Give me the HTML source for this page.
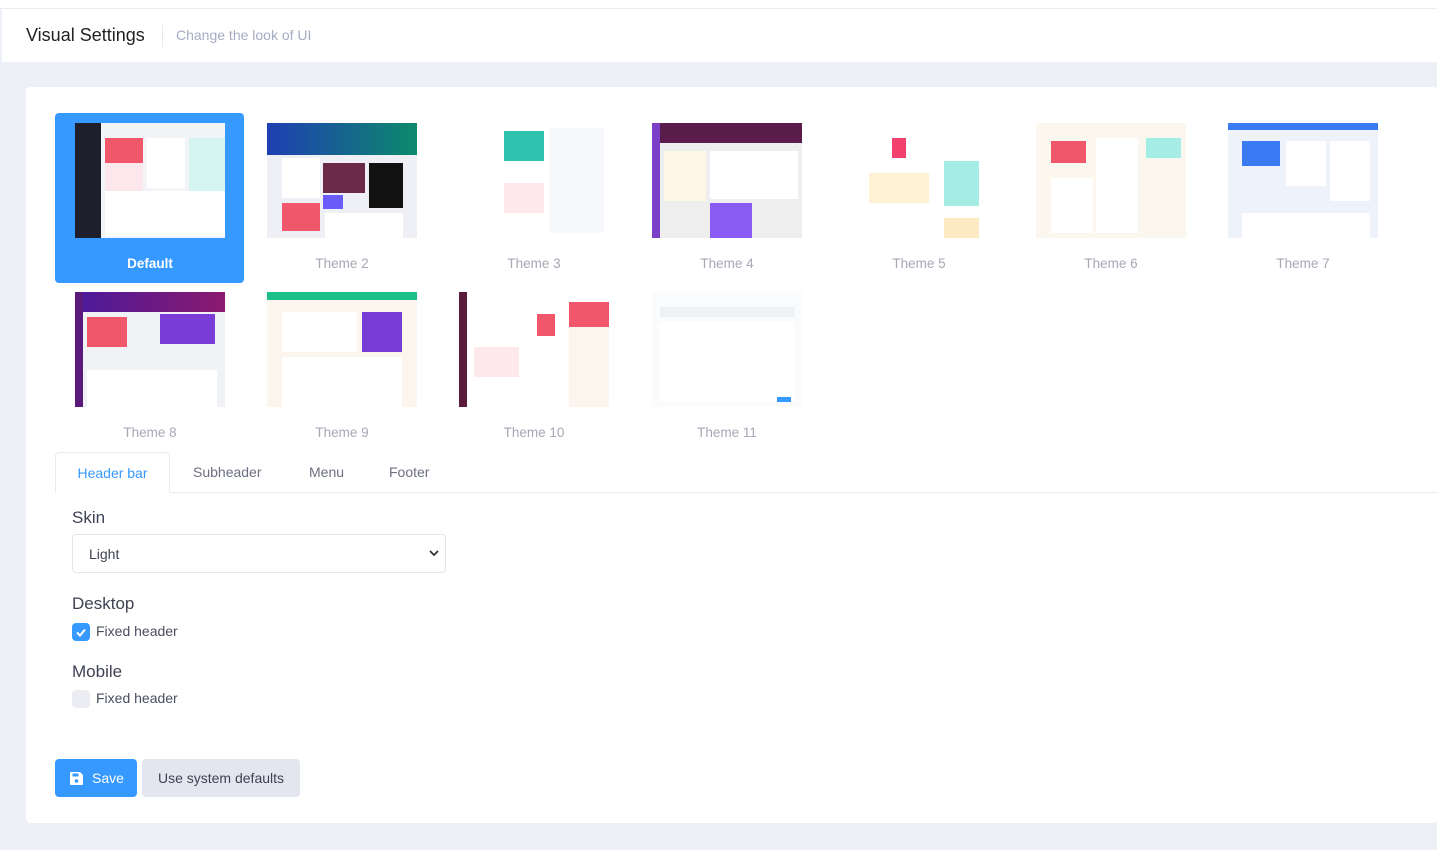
<!DOCTYPE html>
<html><head><style>
*{box-sizing:border-box;margin:0;padding:0}
body{width:1437px;height:850px;background:#eef0f7;font-family:"Liberation Sans",sans-serif;position:relative;overflow:hidden}
.top{position:absolute;left:0;top:0;width:1437px;height:9px;background:#fff;border-bottom:1px solid #ebedf2}
.sub{position:absolute;left:2px;top:9px;width:1435px;height:53px;background:#fff}
.sub h1{position:absolute;left:24px;top:16px;font-size:18px;font-weight:normal;color:#222}
.sub .sep{position:absolute;left:160px;top:16px;width:1px;height:22px;background:#e7e8ee}
.sub span{position:absolute;left:174px;top:18px;font-size:14px;color:#a7abc3}
.card{position:absolute;left:26px;top:87px;width:1411px;height:736px;background:#fff;border-radius:4px}
.sel{position:absolute;left:55px;top:113px;width:189px;height:170px;background:#3699ff;border-radius:4px}
.th{position:absolute;width:150px;height:115px;background:#f5f6fa;overflow:hidden}
.th i{position:absolute;display:block}
.lab{position:absolute;width:150px;text-align:center;font-size:13.5px;color:#a5a8b5}
.tabs{position:absolute;left:55px;top:452px;width:1382px;height:41px;border-bottom:1px solid #e7eaef}
.tab{position:absolute;top:0;height:41px;line-height:41px;font-size:14px;color:#6b6f80}
.tab.a{left:0;width:115px;border:1px solid #e7eaef;border-bottom:1px solid #fff;border-radius:4px 4px 0 0;color:#3699ff;text-align:center;height:41px}
.lbl{position:absolute;left:72px;font-size:17px;color:#3f4254}
.select{position:absolute;left:72px;top:534px;width:374px;height:39px;border:1px solid #e4e6ef;border-radius:4px;font-size:14px;color:#3f4254;padding:11px 16px}
.cb{position:absolute;left:72px;width:18px;height:18px;border-radius:4px;background:#ebedf3}
.cbt{position:absolute;left:96px;font-size:14px;color:#4a4e5e}
.btn{position:absolute;top:759px;height:38px;border-radius:4px;font-size:14px;line-height:38px}
</style></head><body>
<div class="top"></div>
<div class="sub"><h1>Visual Settings</h1><div class="sep"></div><span>Change the look of UI</span></div>
<div class="card"></div>
<div class="sel"></div>

<div class="th" style="left:75px;top:123px;background:#f3f4f8"><i style="left:0;top:0;width:26px;height:115px;background:#1e1e2d"></i><i style="left:30px;top:15px;width:38px;height:25px;background:#f1576a"></i><i style="left:30px;top:40px;width:38px;height:30px;background:#fce7ec"></i><i style="left:72px;top:15px;width:38px;height:50px;background:#fff"></i><i style="left:114px;top:15px;width:36px;height:60px;background:#d6f5f0"></i><i style="left:30px;top:68px;width:120px;height:45px;background:#fff"></i></div>
<div class="lab" style="left:75px;top:256px;color:#fff;font-weight:bold">Default</div>

<div class="th" style="left:267px;top:123px;background:#eef0f6"><i style="left:0;top:0;width:150px;height:32px;background:linear-gradient(90deg,#1f3fb3,#0d8a6c)"></i><i style="left:15px;top:35px;width:38px;height:40px;background:#fff"></i><i style="left:56px;top:40px;width:42px;height:30px;background:#6b2a4a"></i><i style="left:102px;top:40px;width:34px;height:45px;background:#111"></i><i style="left:56px;top:72px;width:20px;height:14px;background:#6a5af9"></i><i style="left:15px;top:80px;width:38px;height:28px;background:#f1576a"></i><i style="left:58px;top:90px;width:78px;height:25px;background:#fff"></i></div>
<div class="lab" style="left:267px;top:256px">Theme 2</div>

<div class="th" style="left:459px;top:123px;background:#fff"><i style="left:45px;top:8px;width:40px;height:30px;background:#2fc2ae"></i><i style="left:45px;top:60px;width:40px;height:30px;background:#fde8ec"></i><i style="left:90px;top:5px;width:55px;height:105px;background:#f7f8fb"></i></div>
<div class="lab" style="left:459px;top:256px">Theme 3</div>

<div class="th" style="left:652px;top:123px;background:#eee"><i style="left:0;top:0;width:150px;height:20px;background:#5a1c4a"></i><i style="left:0;top:0;width:8px;height:115px;background:#7b3fc8"></i><i style="left:12px;top:28px;width:42px;height:50px;background:#fdf6e6"></i><i style="left:58px;top:80px;width:42px;height:35px;background:#8a5cf5"></i><i style="left:58px;top:28px;width:88px;height:48px;background:#fff"></i></div>
<div class="lab" style="left:652px;top:256px">Theme 4</div>

<div class="th" style="left:844px;top:123px;background:#fff"><i style="left:48px;top:15px;width:14px;height:20px;background:#f1416c"></i><i style="left:25px;top:50px;width:60px;height:30px;background:#fff3d6"></i><i style="left:100px;top:38px;width:35px;height:45px;background:#a5ede4"></i><i style="left:100px;top:95px;width:35px;height:20px;background:#fde9c2"></i></div>
<div class="lab" style="left:844px;top:256px">Theme 5</div>

<div class="th" style="left:1036px;top:123px;background:#fbf6ee"><i style="left:15px;top:18px;width:35px;height:22px;background:#f1576a"></i><i style="left:110px;top:15px;width:35px;height:20px;background:#a5ede4"></i><i style="left:60px;top:15px;width:42px;height:95px;background:#fff"></i><i style="left:15px;top:55px;width:42px;height:55px;background:#fff"></i></div>
<div class="lab" style="left:1036px;top:256px">Theme 6</div>

<div class="th" style="left:1228px;top:123px;background:#eef3fb"><i style="left:0;top:0;width:150px;height:7px;background:#3a7bf3"></i><i style="left:14px;top:18px;width:38px;height:25px;background:#3a7bf3"></i><i style="left:58px;top:18px;width:40px;height:45px;background:#fff"></i><i style="left:102px;top:18px;width:40px;height:60px;background:#fff"></i><i style="left:14px;top:90px;width:128px;height:25px;background:#fff"></i></div>
<div class="lab" style="left:1228px;top:256px">Theme 7</div>

<div class="th" style="left:75px;top:292px;background:#f1f2f6"><i style="left:0;top:0;width:150px;height:20px;background:linear-gradient(90deg,#4a1a9c,#8b1a6e)"></i><i style="left:0;top:0;width:8px;height:115px;background:#5a1a7c"></i><i style="left:12px;top:25px;width:40px;height:30px;background:#f1576a"></i><i style="left:85px;top:22px;width:55px;height:30px;background:#7a3cd6"></i><i style="left:12px;top:78px;width:130px;height:37px;background:#fff"></i></div>
<div class="lab" style="left:75px;top:425px">Theme 8</div>

<div class="th" style="left:267px;top:292px;background:#fbf5ee"><i style="left:0;top:0;width:150px;height:8px;background:#1bc08a"></i><i style="left:95px;top:20px;width:40px;height:40px;background:#7a3cd6"></i><i style="left:15px;top:20px;width:75px;height:40px;background:#fff"></i><i style="left:15px;top:65px;width:120px;height:50px;background:#fff"></i></div>
<div class="lab" style="left:267px;top:425px">Theme 9</div>

<div class="th" style="left:459px;top:292px;background:#fff"><i style="left:0;top:0;width:8px;height:115px;background:#5a1c3a"></i><i style="left:110px;top:10px;width:40px;height:25px;background:#f1576a"></i><i style="left:78px;top:22px;width:18px;height:22px;background:#f1576a"></i><i style="left:110px;top:35px;width:40px;height:80px;background:#fbf5ee"></i><i style="left:15px;top:55px;width:45px;height:30px;background:#fde8ec"></i></div>
<div class="lab" style="left:459px;top:425px">Theme 10</div>

<div class="th" style="left:652px;top:292px;background:#fafbfc"><i style="left:8px;top:15px;width:135px;height:10px;background:#f0f1f5"></i><i style="left:8px;top:30px;width:135px;height:80px;background:#fff"></i><i style="left:125px;top:105px;width:14px;height:5px;background:#3699ff"></i></div>
<div class="lab" style="left:652px;top:425px">Theme 11</div>

<div class="tabs">
<div class="tab a">Header bar</div>
<div class="tab" style="left:138px">Subheader</div>
<div class="tab" style="left:254px">Menu</div>
<div class="tab" style="left:334px">Footer</div>
</div>

<div class="lbl" style="top:508px">Skin</div>
<div class="select">Light<svg style="position:absolute;right:6px;top:15px" width="10" height="7" viewBox="0 0 10 7"><path d="M1 1l4 4 4-4" stroke="#333" stroke-width="1.8" fill="none"/></svg></div>
<div class="lbl" style="top:594px">Desktop</div>
<div class="cb" style="top:623px;background:#3699ff"><svg width="18" height="18" viewBox="0 0 18 18"><path d="M5 9.5l3 3 5-6" stroke="#fff" stroke-width="2" fill="none"/></svg></div>
<div class="cbt" style="top:623px">Fixed header</div>
<div class="lbl" style="top:662px">Mobile</div>
<div class="cb" style="top:690px"></div>
<div class="cbt" style="top:690px">Fixed header</div>

<div class="btn" style="left:55px;width:82px;background:#3699ff;color:#fff"><svg style="position:absolute;left:14px;top:12px" width="15" height="15" viewBox="0 0 15 15"><path d="M1 2a1 1 0 0 1 1-1h9l3 3v9a1 1 0 0 1-1 1H2a1 1 0 0 1-1-1z" fill="#fff"/><rect x="3.5" y="2.5" width="6" height="3" fill="#3699ff"/><circle cx="7.5" cy="10" r="1.8" fill="#3699ff"/></svg><span style="position:absolute;left:37px">Save</span></div>
<div class="btn" style="left:142px;width:158px;background:#e4e6ef;color:#3f4254;text-align:center">Use system defaults</div>
</body></html>
